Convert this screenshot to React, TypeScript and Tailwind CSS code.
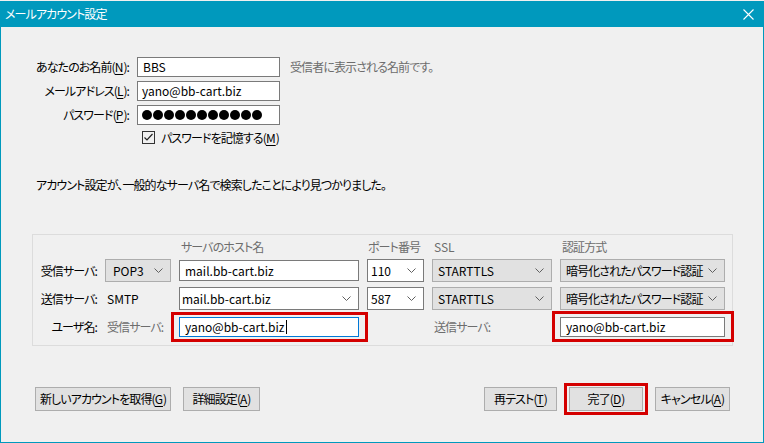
import React from "react";

const Chevron = () => (
  <svg width="9" height="5" viewBox="0 0 9 5" className="shrink-0">
    <polyline points="0.5,0.5 4.5,4.5 8.5,0.5" fill="none" stroke="#606060" strokeWidth="1" />
  </svg>
);

const U = ({ c }: { c: string }) => <span className="underline underline-offset-[2px] tracking-normal">{c}</span>;

const GraySelect = ({ text, className }: { text: string; className: string }) => (
  <div className={`h-[23px] bg-[#e1e1e1] border border-[#adadad] flex items-center justify-between pl-[5px] pr-[7px] whitespace-nowrap overflow-hidden ${className}`}>
    <span>{text}</span>
    <Chevron />
  </div>
);

const WhiteSelect = ({ text, className }: { text: string; className: string }) => (
  <div className={`h-[23px] bg-white border border-[#7a7a7a] flex items-center justify-between pl-[2px] pr-[7px] whitespace-nowrap tracking-normal ${className}`}>
    <span>{text}</span>
    <Chevron />
  </div>
);

const Btn = ({ children, w }: { children: React.ReactNode; w: string }) => (
  <div className={`h-[24px] ${w} bg-[#e1e1e1] border border-[#adadad] flex items-center justify-center whitespace-nowrap`}>{children}</div>
);

const row = "grid grid-cols-[64px_66px_180px_57px_120px_165px] gap-x-[8px] items-center whitespace-nowrap";

export default function App() {
  return (
    <div className="w-[764px] h-[443px] bg-[#f0f0f0] flex flex-col text-[12px] text-black font-['Noto_Sans_CJK_JP',sans-serif] [font-feature-settings:'palt'] tracking-[-0.9px] leading-none">
      <div className="h-[1px] bg-[#f0f0f0]" />
      <div className="h-[26px] bg-[#0099bd] flex items-center justify-between pl-[5px] pr-[10px] text-white">
        <span className="text-[12px]">メールアカウント設定</span>
        <svg width="11" height="11" viewBox="0 0 11 11">
          <path d="M0.5 0.5 L10.5 10.5 M10.5 0.5 L0.5 10.5" stroke="white" strokeWidth="1.1" />
        </svg>
      </div>
      <div className="flex-1 border-x border-b border-[#0099bd] flex flex-col">
        {/* identity form */}
        <div className="pt-[30px] grid grid-cols-[128px_143px_auto] gap-x-[8px] gap-y-[4px] items-center whitespace-nowrap">
          <div className="text-right">あなたのお名前(<U c="N" />):</div>
          <div className="h-[20px] bg-white border border-[#7a7a7a] flex items-center pl-[5px] tracking-normal">BBS</div>
          <div className="pl-[2px] text-[#6d6d6d]">受信者に表示される名前です。</div>

          <div className="text-right">メールアドレス(<U c="L" />):</div>
          <div className="h-[20px] bg-white border border-[#7a7a7a] flex items-center pl-[4px] tracking-normal">yano@bb-cart.biz</div>
          <div />

          <div className="text-right">パスワード(<U c="P" />):</div>
          <div className="h-[20px] bg-white border border-[#7a7a7a] flex items-center pl-[4px] gap-[1px]">
            {Array.from({ length: 11 }).map((_, i) => (
              <span key={i} className="w-[10px] h-[10px] rounded-full bg-black" />
            ))}
          </div>
          <div />

          <div />
          <div className="mt-[2px] flex items-center pl-[5px] gap-[6px] h-[13px]">
            <div className="w-[13px] h-[13px] border border-[#333] bg-[#f0f0f0] flex items-center justify-center">
              <svg width="11" height="11" viewBox="0 0 11 11">
                <polyline points="1.5,5.5 4,8 9.5,2" fill="none" stroke="#222" strokeWidth="1.2" />
              </svg>
            </div>
            <span className="whitespace-nowrap">パスワードを記憶する(<U c="M" />)</span>
          </div>
          <div />
        </div>

        <div className="mt-[33px] h-[16px] flex items-center pl-[35px] whitespace-nowrap">
          アカウント設定が、一般的なサーバ名で検索したことにより見つかりました。
        </div>

        {/* server panel */}
        <div className="mt-[41px] ml-[31px] w-[701px] h-[112px] border border-[#dcdcdc] flex flex-col">
          <div className={`${row} h-[24px] text-[#6d6d6d]`}>
            <div />
            <div />
            <div className="pl-[2px]">サーバのホスト名</div>
            <div className="pl-[1px]">ポート番号</div>
            <div className="pl-[2px] tracking-normal">SSL</div>
            <div className="pl-[2px]">認証方式</div>
          </div>
          <div className={`${row} h-[23px]`}>
            <div className="text-right">受信サーバ:</div>
            <GraySelect text="POP3" className="pl-[7px] tracking-normal" />
            <div className="h-[21px] bg-white border border-[#7a7a7a] flex items-center pl-[5px] tracking-normal">mail.bb-cart.biz</div>
            <WhiteSelect text="110" className="pl-[3px]" />
            <GraySelect text="STARTTLS" className="tracking-normal" />
            <GraySelect text="暗号化されたパスワード認証" className="" />
          </div>
          <div className={`${row} h-[23px] mt-[5px]`}>
            <div className="text-right">送信サーバ:</div>
            <div className="pl-[2px] tracking-normal">SMTP</div>
            <WhiteSelect text="mail.bb-cart.biz" className="" />
            <WhiteSelect text="587" className="pl-[3px]" />
            <GraySelect text="STARTTLS" className="tracking-normal" />
            <GraySelect text="暗号化されたパスワード認証" className="" />
          </div>
          <div className={`${row} h-[20px] mt-[7px]`}>
            <div className="text-right">ユーザ名:</div>
            <div className="pl-[2px] text-[#6d6d6d]">受信サーバ:</div>
            <div className="relative h-[20px]">
              <div className="h-[20px] bg-white border border-[#0078d7] flex items-center pl-[5px] tracking-normal">
                yano@bb-cart.biz<span className="inline-block w-[1px] h-[14px] bg-black ml-[1px]" />
              </div>
              <div className="absolute -left-[8px] -right-[9px] -top-[5px] -bottom-[5px] border-[3px] border-[#d40000]" />
            </div>
            <div />
            <div className="pl-[2px] text-[#6d6d6d]">送信サーバ:</div>
            <div className="relative h-[20px]">
              <div className="h-[20px] bg-white border border-[#7a7a7a] flex items-center pl-[5px] tracking-normal">yano@bb-cart.biz</div>
              <div className="absolute -left-[8px] -right-[9px] -top-[6px] -bottom-[5px] border-[3px] border-[#d40000]" />
            </div>
          </div>
        </div>

        {/* buttons */}
        <div className="mt-[41px] flex items-center justify-between pl-[34px] pr-[33px]">
          <div className="flex gap-[12px]">
            <Btn w="w-[136px]">新しいアカウントを取得(<U c="G" />)</Btn>
            <Btn w="w-[77px]">詳細設定(<U c="A" />)</Btn>
          </div>
          <div className="flex gap-[12px]">
            <Btn w="w-[73px]">再テスト(<U c="T" />)</Btn>
            <div className="relative">
              <Btn w="w-[74px]">完了(<U c="D" />)</Btn>
              <div className="absolute -left-[5px] -right-[5px] -top-[4px] -bottom-[4px] border-[3px] border-[#d40000]" />
            </div>
            <Btn w="w-[75px]">キャンセル(<U c="A" />)</Btn>
          </div>
        </div>
      </div>
    </div>
  );
}
